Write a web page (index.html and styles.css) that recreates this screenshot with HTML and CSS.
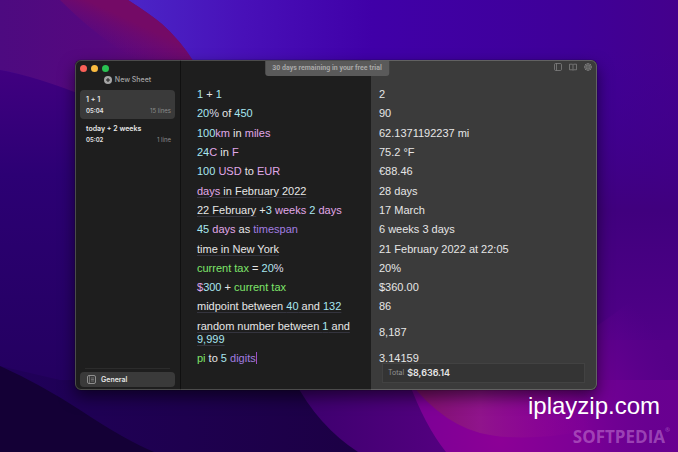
FILE: index.html
```html
<!DOCTYPE html>
<html lang="en">
<head>
<meta charset="utf-8">
<title>Sheets</title>
<link rel="stylesheet" href="styles.css">
</head>
<body>
<svg class="wallpaper" viewBox="0 0 678 452" preserveAspectRatio="none" aria-hidden="true">
  <defs>
    <linearGradient id="base" x1="0" y1="0" x2="1" y2="0">
      <stop offset="0" stop-color="#4a0888"/><stop offset=".2" stop-color="#4b24c6"/><stop offset=".36" stop-color="#4810b8"/><stop offset=".55" stop-color="#4000a8"/><stop offset=".85" stop-color="#3f0098"/><stop offset="1" stop-color="#44008c"/>
    </linearGradient>
    <linearGradient id="plum" x1="0" y1="0" x2="1" y2="0">
      <stop offset="0" stop-color="#4d0a80"/><stop offset=".5" stop-color="#56087f"/><stop offset="1" stop-color="#680a74"/>
    </linearGradient>
    <linearGradient id="wine" x1="0" y1="1" x2="1" y2="0">
      <stop offset=".3" stop-color="#6a0a78" stop-opacity="0"/><stop offset=".6" stop-color="#740a66"/>
    </linearGradient>
    <linearGradient id="left" x1="0" y1="0" x2="0" y2="1">
      <stop offset="0" stop-color="#400080"/><stop offset=".3" stop-color="#2c0074"/><stop offset="1" stop-color="#22005c"/>
    </linearGradient>
    <linearGradient id="floor" x1="0" y1="0" x2="1" y2="0">
      <stop offset="0" stop-color="#20005a"/><stop offset="1" stop-color="#1c0044"/>
    </linearGradient>
    <linearGradient id="violet" x1="0" y1="0" x2="1" y2="0">
      <stop offset="0" stop-color="#3c006e"/><stop offset="1" stop-color="#6a0090"/>
    </linearGradient>
    <linearGradient id="right" x1="0" y1="0" x2="0" y2="1">
      <stop offset="0" stop-color="#3c0092" stop-opacity="0"/><stop offset=".4" stop-color="#40007e"/><stop offset=".75" stop-color="#520088"/><stop offset="1" stop-color="#5c0090"/>
    </linearGradient>
    <radialGradient id="magenta" gradientUnits="userSpaceOnUse" cx="500" cy="440" r="190">
      <stop offset="0" stop-color="#8c0096"/><stop offset=".45" stop-color="#7c0096"/><stop offset="1" stop-color="#5c0090" stop-opacity="0"/>
    </radialGradient>
    <linearGradient id="pink" x1="0" y1="0" x2="1" y2="0">
      <stop offset="0" stop-color="#7c1068"/><stop offset=".4" stop-color="#90148c"/><stop offset="1" stop-color="#8a0098" stop-opacity="0"/>
    </linearGradient>
  </defs>
  <rect width="678" height="452" fill="url(#base)"/>
  <path d="M0 0H128Q150 14 162 24Q180 40 194 62V100H75Q30 74 0 70Z" fill="url(#plum)"/>
  <path d="M84 0H128Q150 14 162 24Q180 40 194 62H140Q100 40 60 0Z" fill="url(#wine)"/>
  <path d="M0 70Q35 76 90 98V420H0Z" fill="url(#left)"/>
  <rect x="560" y="50" width="118" height="402" fill="url(#right)"/>
  <path d="M0 366L60 380H370V452H0Z" fill="url(#floor)"/>
  <path d="M0 366Q40 384 80 410Q125 440 154 452H0Z" fill="#140036"/>
  <path d="M294 380Q318 426 358 452H590V380Z" fill="url(#violet)"/>
  <rect x="590" y="380" width="88" height="72" fill="#6a0090"/>
  <path d="M590 340H678V380H590Z" fill="#560088"/>
  <path d="M408 380Q425 426 446 452H678V250Q640 300 590 330V380Z" fill="url(#magenta)"/>
  <path d="M408 380Q445 428 490 435Q530 442 590 430V380Z" fill="url(#pink)"/>
</svg>

<main class="window">
  <aside class="sidebar">
    <div class="lights"><i class="red"></i><i class="yellow"></i><i class="green"></i></div>
    <button class="new-sheet" type="button">
      <svg width="8" height="8" viewBox="0 0 8 8"><circle cx="4" cy="4" r="4" fill="#a5a5a5"/><path d="M4 2v4M2 4h4" stroke="#1e1e1e" stroke-width="1"/></svg>
      New Sheet
    </button>
    <button class="sheet active" type="button">
      <span class="name">1 + 1</span>
      <span class="meta"><span>05:04</span><span class="count">15 lines</span></span>
    </button>
    <button class="sheet" type="button">
      <span class="name">today + 2 weeks</span>
      <span class="meta"><span>05:02</span><span class="count">1 line</span></span>
    </button>
    <footer class="folders">
      <button class="folder" type="button">
        <svg width="9" height="9" viewBox="0 0 9 9" fill="none" stroke="#8f8f8f"><rect x=".5" y=".5" width="8" height="8" rx="1.5"/><path d="M2.5 1v7" stroke-width=".6"/><path d="M4 3h3M4 4.5h3M4 6h3" stroke-width=".6"/></svg>
        General
      </button>
    </footer>
  </aside>

  <section class="editor lines">
    <p><b class="num">1</b> + <b class="num">1</b></p>
    <p><b class="num">20</b><b class="pct">%</b> of <b class="num">450</b></p>
    <p><b class="num">100</b><b class="unit">km</b> in <b class="unit">miles</b></p>
    <p><b class="num">24</b><b class="unit">C</b> in <b class="unit">F</b></p>
    <p><b class="num">100</b> <b class="unit">USD</b> to <b class="unit">EUR</b></p>
    <p><u><b class="unit">days</b> in February 2022</u></p>
    <p><u>22 February</u> +<b class="num">3</b> <b class="unit">weeks</b> <b class="num">2</b> <b class="unit">days</b></p>
    <p><b class="num">45</b> <b class="unit">days</b> as <b class="fmt">timespan</b></p>
    <p><u>time in New York</u></p>
    <p><b class="var">current tax</b> = <b class="num">20</b><b class="pct">%</b></p>
    <p><b class="unit">$</b><b class="num">300</b> + <b class="var">current tax</b></p>
    <p><u>midpoint between <b class="num">40</b> and <b class="num">132</b></u></p>
    <p><u>random number between <b class="num">1</b> and <b class="num">9,999</b></u></p>
    <p><b class="var">pi</b> to <b class="num">5</b> <b class="fmt caret">digits</b></p>
  </section>

  <section class="results">
    <nav class="tools">
      <button type="button" aria-label="Toggle sidebar"><svg width="8" height="8" viewBox="0 0 8 8"><rect x=".5" y=".5" width="7" height="7" rx="1.2"/><path d="M2.5 .5v7"/></svg></button>
      <button type="button" aria-label="Reference"><svg width="8" height="8" viewBox="0 0 8 8"><path d="M.5 1.2h3L4 1.7l.5-.5h3v5.6h-3L4 7.3l-.5-.5h-3zM4 1.7v5.6"/></svg></button>
      <button type="button" aria-label="Settings"><svg width="8" height="8" viewBox="0 0 8 8"><circle cx="4" cy="4" r="3.3"/><circle cx="4" cy="4" r="1.3"/><path d="M4 0v2.7M4 5.3V8M0 4h2.7M5.3 4H8M1.2 1.2l1.9 1.9M4.9 4.9l1.9 1.9M1.2 6.8l1.9-1.9M4.9 3.1l1.9-1.9"/></svg></button>
    </nav>
    <div class="lines">
      <p>2</p>
      <p>90</p>
      <p>62.1371192237 mi</p>
      <p>75.2 °F</p>
      <p>€88.46</p>
      <p>28 days</p>
      <p>17 March</p>
      <p>6 weeks 3 days</p>
      <p>21 February 2022 at 22:05</p>
      <p>20%</p>
      <p>$360.00</p>
      <p>86</p>
      <p>8,187</p>
      <p>3.14159</p>
    </div>
    <div class="total">Total <strong>$8,636.14</strong></div>
  </section>
  <div class="trial">30 days remaining in your free trial</div>
</main>

<div class="site">iplayzip.com</div>
<div class="brand">SOFTPEDIA<sup>®</sup></div>
</body>
</html>
```
FILE: styles.css
```css
* { box-sizing: border-box; }

body {
  margin: 0;
  height: 100vh;
  padding: 60px 81px 62px 75px;
  position: relative;
  overflow: hidden;
  background: #30008a;
  color: #e6e6e6;
  font: 12px/13px Inter, "Liberation Sans", sans-serif;
}

button {
  border: 0;
  padding: 0;
  background: none;
  color: inherit;
  font: inherit;
  text-align: left;
}

svg { display: block; flex: none; }

.wallpaper {
  position: absolute;
  inset: 0;
  width: 100%;
  height: 100%;
}

.window {
  position: relative;
  display: grid;
  grid-template-columns: 106px 190fr 226fr;
  grid-template-rows: minmax(0, 1fr);
  height: 100%;
  border-radius: 6px;
  background: #1e1e1e;
  box-shadow: 0 0 1px #000, 0 7px 16px rgba(0, 0, 0, .55);
}

.window::after {
  content: "";
  position: absolute;
  inset: 0;
  border: 1px solid rgba(255, 255, 255, .2);
  border-radius: 6px;
  pointer-events: none;
}

.sidebar {
  display: flex;
  flex-direction: column;
  padding: 5px 5px 3px;
  border-right: 1px solid #101010;
}

.lights { display: flex; gap: 4px; height: 7px; }
.lights i { width: 7px; height: 7px; border-radius: 50%; }
.red { background: #fb6058; }
.yellow { background: #fbbc40; }
.green { background: #2ac152; }

.new-sheet {
  display: flex;
  align-items: center;
  align-self: center;
  gap: 3px;
  height: 15px;
  font-size: 7px;
  font-weight: 500;
  color: #a5a5a5;
}

.sheet {
  display: flex;
  flex-direction: column;
  gap: 1px;
  margin-top: 3px;
  padding: 5px 4px 4px 6px;
  border-radius: 4px;
  line-height: 10px;
}

.sheet + .sheet { margin-top: 0; }
.active { background: #3a3a3a; }
.name { font-size: 7px; font-weight: 600; }
.meta { display: flex; justify-content: space-between; font-size: 6px; font-weight: 600; line-height: 9px; }
.count { font-weight: 400; color: #8c8c8c; }

.folders { margin-top: auto; }

.folders::before {
  content: "";
  display: block;
  height: 1px;
  margin: 0 5px 3px;
  background: #2c2c2c;
}

.folder {
  display: flex;
  align-items: center;
  gap: 5px;
  width: 100%;
  height: 15px;
  padding: 0 7px;
  border-radius: 4px;
  background: #3a3a3a;
  font-size: 7px;
  font-weight: 600;
}

.lines {
  display: grid;
  grid-template-rows: repeat(12, 6fr) 10fr 6fr;
  align-items: center;
  height: 100%;
  padding: 25px 8px 22px;
  font-family: "Liberation Sans", sans-serif;
  font-size: 11px;
}

.lines p { margin: 0; }

.editor { padding-left: 16px; }
.editor b { font-weight: 400; }
.editor u { text-decoration: underline 1px #34343e; text-underline-offset: 2px; }
.num { color: #a8e6f0; }
.unit { color: #e0a8e8; }
.fmt { color: #a27de0; }
.var { color: #7fe56a; }
.pct { color: #dcdce8; }
.caret { border-right: 1px solid #9a4fc8; }

.results {
  position: relative;
  border-radius: 0 6px 6px 0;
  background: #3b3b3b;
}

.tools {
  position: absolute;
  top: 3px;
  right: 5px;
  display: flex;
  gap: 7px;
}

.tools svg { fill: none; stroke: #8a8a8a; stroke-width: .7; }

.total {
  position: absolute;
  right: 12px;
  bottom: 7px;
  left: 11px;
  display: flex;
  gap: 3px;
  height: 20px;
  padding: 0 5px;
  border: 1px solid #424242;
  background: #343434;
  color: #929292;
  font-size: 7px;
  line-height: 18px;
}

.total strong { color: #e6e6e6; font-size: 9px; font-weight: 600; }

.trial {
  position: absolute;
  top: 1px;
  left: 50%;
  transform: translateX(-50%);
  margin-left: -9px;
  padding: 0 7px;
  border-radius: 0 0 3px 3px;
  background: #5a5a5a;
  color: #a8a8a8;
  font: bold 7px/15px Roboto, sans-serif;
  white-space: nowrap;
}

.site {
  position: absolute;
  right: 18px;
  bottom: 32px;
  color: #fff;
  font: 24px/28px "Liberation Sans", sans-serif;
}

.brand {
  position: absolute;
  right: 8px;
  bottom: 5px;
  color: rgba(214, 150, 224, .45);
  font: bold 17px/20px "Open Sans", sans-serif;
}

.brand sup { font-size: 6px; line-height: 6px; vertical-align: top; }
```
